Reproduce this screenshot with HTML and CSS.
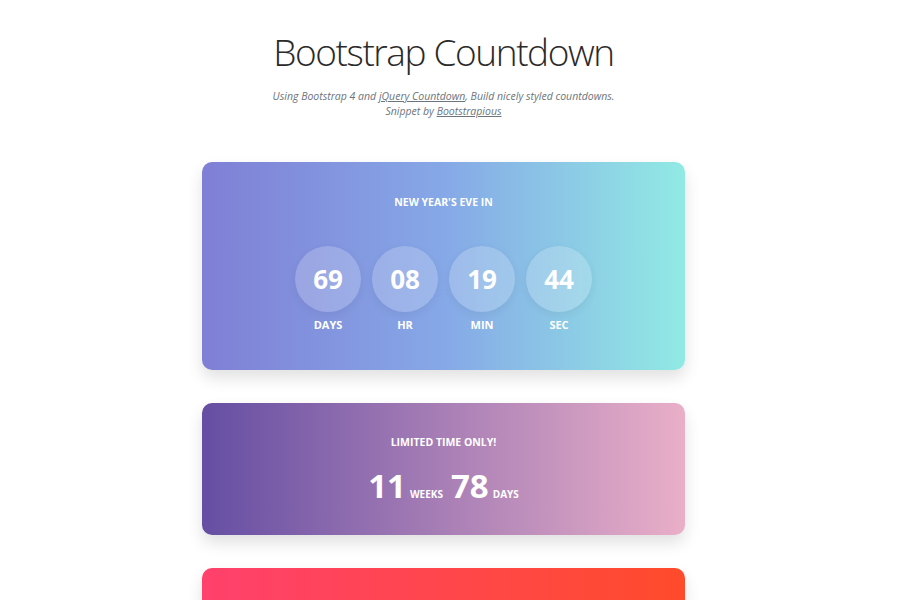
FILE: index.html
```html
<!DOCTYPE html>
<html lang="en">
<head>
    <meta charset="UTF-8">
    <meta name="viewport" content="width=device-width, initial-scale=1.0">
    <title>Bootstrap Countdown</title>
    <link rel="stylesheet" href="styles.css">
</head>
<body>
    <div class="page">
        <header class="intro">
            <h1>Bootstrap Countdown</h1>
            <p>Using Bootstrap 4 and <a href="#">jQuery Countdown</a>, Build nicely styled countdowns.<br>
            Snippet by <a href="#">Bootstrapious</a></p>
        </header>

        <!-- Countdown 1: circles -->
        <div class="card card-azure">
            <p class="card-title">NEW YEAR'S EVE IN</p>
            <div class="circles">
                <div class="unit">
                    <div class="circle">69</div>
                    <span class="label">DAYS</span>
                </div>
                <div class="unit">
                    <div class="circle">08</div>
                    <span class="label">HR</span>
                </div>
                <div class="unit">
                    <div class="circle">19</div>
                    <span class="label">MIN</span>
                </div>
                <div class="unit">
                    <div class="circle">44</div>
                    <span class="label">SEC</span>
                </div>
            </div>
        </div>

        <!-- Countdown 2: inline -->
        <div class="card card-violet">
            <p class="card-title">LIMITED TIME ONLY!</p>
            <div class="inline-count">
                <span class="big">11</span><span class="small">WEEKS</span>
                <span class="big">78</span><span class="small">DAYS</span>
            </div>
        </div>

        <!-- Countdown 3 -->
        <div class="card card-red"></div>
    </div>
</body>
</html>
```

FILE: styles.css
```css
body {
    margin: 0;
    padding-right: 13px;
    background: #fff;
    font-family: "Open Sans", "Noto Sans", sans-serif;
    color: #212529;
}
.page {
    width: 483px;
    margin: 0 auto;
    padding-top: 26px;
}
.intro {
    text-align: center;
}
.intro h1 {
    font-weight: 300;
    font-size: 37px;
    letter-spacing: -1.4px;
    margin: 0;
    line-height: 52px;
    color: #2a2a2a;
}
.intro p {
    margin: 11px 0 0;
    font-size: 10.5px;
    line-height: 15px;
    font-style: italic;
    color: #6c757d;
}
.intro a {
    color: #6c757d;
    text-decoration: underline;
}
.card {
    border-radius: 10px;
    box-shadow: 0 8px 16px rgba(0, 0, 0, 0.12);
    color: #fff;
    text-align: center;
    margin-top: 33px;
}
.card-azure {
    margin-top: 43px;
    height: 208px;
    background: linear-gradient(to right, #7f7fd5, #86a8e7, #91eae4);
    padding-top: 32px;
    box-sizing: border-box;
}
.card-violet {
    height: 132px;
    background: linear-gradient(to right, #654ea3, #eaafc8);
    padding-top: 31px;
    box-sizing: border-box;
}
.card-red {
    height: 120px;
    background: linear-gradient(to right, #ff416c, #ff4b2b);
}
.card-title {
    margin: 0;
    font-size: 10.5px;
    font-weight: 700;
    line-height: 16px;
}
.circles {
    display: flex;
    justify-content: center;
    gap: 11px;
    margin-top: 36px;
}
.unit {
    display: flex;
    flex-direction: column;
    align-items: center;
}
.circle {
    width: 66px;
    height: 66px;
    border-radius: 50%;
    background: rgba(255, 255, 255, 0.2);
    box-shadow: 0 3px 10px rgba(0, 0, 0, 0.06);
    display: flex;
    align-items: center;
    justify-content: center;
    font-size: 26px;
    font-weight: 700;
}
.label {
    margin-top: 5px;
    font-size: 11px;
    font-weight: 700;
    line-height: 16px;
}
.inline-count {
    margin-top: 16px;
    display: flex;
    justify-content: center;
    align-items: baseline;
    padding-left: 8px;
}
.big {
    font-size: 33px;
    font-weight: 700;
    line-height: 40px;
}
.small {
    font-size: 10px;
    font-weight: 700;
    margin: 0 8px 0 4px;
}
```
